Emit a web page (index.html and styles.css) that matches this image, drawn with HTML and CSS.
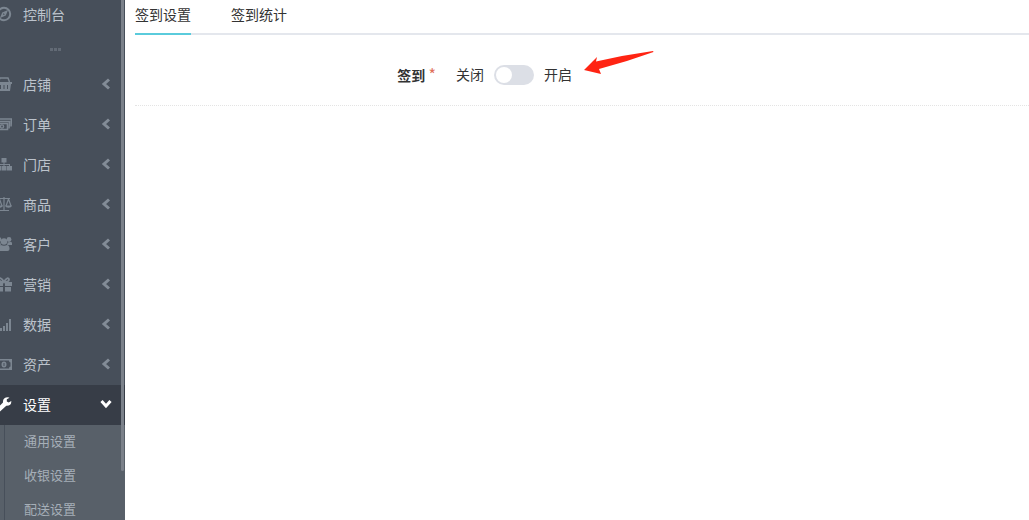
FILE: index.html
```html
<!DOCTYPE html>
<html lang="zh-CN">
<head>
    <meta charset="UTF-8">
    <meta name="viewport" content="width=device-width, initial-scale=1.0">
    <title>签到设置</title>
    <link rel="stylesheet" href="styles.css">
</head>
<body>

<!-- Shared chevron -->
<svg class="symbols" aria-hidden="true">
    <symbol id="chevron" viewBox="0 0 10 12"><path d="M8 1.5 3 6l5 4.5" fill="none" stroke="currentColor" stroke-width="3"/></symbol>
</svg>

<!-- Sidebar -->
<nav class="sidebar">
    <ul class="menu">
        <li><a class="menu-item menu-first" href="#">
            <svg class="icon" viewBox="0 0 16 16"><circle cx="8" cy="8" r="6.2" fill="none" stroke="currentColor" stroke-width="2"/><path d="M12 4 9.8 9.6 4 12 6.2 6.4zM7.2 7.2v1.8l1.8-.8z" fill="currentColor" fill-rule="evenodd"/></svg>
            <span>控制台</span></a></li>
        <li class="divider"><i></i><i></i><i></i></li>
        <li><a class="menu-item" href="#">
            <svg class="icon" viewBox="0 0 16 16"><path d="M2.5 6 4 2h8l1.500 4" fill="none" stroke="currentColor" stroke-width="1.4"/><path d="M0 6h16v2h-1l-1 7H2L1 8H0zM4 9v4h1V9zm3.500 0v4h1V9zM11 9v4h1V9z" fill="currentColor" fill-rule="evenodd"/></svg>
            <span>店铺</span><svg class="arrow"><use href="#chevron"/></svg></a></li>
        <li><a class="menu-item" href="#">
            <svg class="icon" viewBox="0 0 16 16"><path d="M2 3h13.500L15 10.500M1 5.500h12.500l-.5 7" fill="none" stroke="currentColor" stroke-width="1.6"/><path d="M.5 7.500h11v6H.5z" fill="none" stroke="currentColor" stroke-width="1.6"/><circle cx="6" cy="10.500" r="1.6" fill="none" stroke="currentColor" stroke-width="1.4"/></svg>
            <span>订单</span><svg class="arrow"><use href="#chevron"/></svg></a></li>
        <li><a class="menu-item" href="#">
            <svg class="icon" viewBox="0 0 16 16"><path d="M5.5 2h5v4.500h-2V8H14v2h2v4.500h-5V10h2V9H8.500v1h2v4.500h-5V10h2V9H3v1h2v4.500H0V10h2V8h5.500V6.500h-2z" fill="currentColor"/></svg>
            <span>门店</span><svg class="arrow"><use href="#chevron"/></svg></a></li>
        <li><a class="menu-item" href="#">
            <svg class="icon" viewBox="0 0 16 16"><path d="M8 1v13.500M3 14.500h10M2 2.500h12M3.500 3 1 10M3.500 3 6 10M12.500 3 10 10M12.500 3l2.500 7" fill="none" stroke="currentColor" stroke-width="1.2"/><path d="M0 9.500h7c-.5 3-6.500 3-7 0zM9 9.500h7c-.5 3-6.500 3-7 0z" fill="currentColor"/></svg>
            <span>商品</span><svg class="arrow"><use href="#chevron"/></svg></a></li>
        <li><a class="menu-item" href="#">
            <svg class="icon" viewBox="0 0 16 16"><g fill="currentColor"><circle cx="3" cy="3.5" r="2.400"/><circle cx="13" cy="3.5" r="2.4"/><circle cx="8" cy="5.5" r="3.2"/><path d="M0 9V7q0-1.500 2-1l2.500.5Q4.500 8 5 9zM16 9V7q0-1.500-2-1l-2.500.5q0 1.500-.5 2.500zM5 9q3 1.500 6 0 2.500 0 2.500 4 0 2-2 2h-7q-2 0-2-2Q2.500 9 5 9z"/></g></svg>
            <span>客户</span><svg class="arrow"><use href="#chevron"/></svg></a></li>
        <li><a class="menu-item" href="#">
            <svg class="icon" viewBox="0 0 16 16"><path d="M0 6h7v4H0zM9 6h7v4H9zM1 11h6v4.500H1zM9 11h6v4.500H9z" fill="currentColor"/><path d="M8 6C6 1.500 3 1.500 3 3.500S5 6 8 6c3 0 5-.5 5-2.500s-3-2-5 2.500z" fill="none" stroke="currentColor" stroke-width="1.8"/></svg>
            <span>营销</span><svg class="arrow"><use href="#chevron"/></svg></a></li>
        <li><a class="menu-item" href="#">
            <svg class="icon" viewBox="0 0 16 16"><path d="M1 13h2v2H1zM4 12h2v3H4zM7 10h2v5H7zM10 7h2v8h-2zM13 3h2v12h-2z" fill="currentColor"/></svg>
            <span>数据</span><svg class="arrow"><use href="#chevron"/></svg></a></li>
        <li><a class="menu-item" href="#">
            <svg class="icon" viewBox="0 0 16 16"><path d="M0 3h16v11H0zM3 4.500Q3 6.500 1.500 6.500v4Q3 10.500 3 12.500h10q0-2 1.500-2v-4Q13 6.500 13 4.500z" fill="currentColor" fill-rule="evenodd"/><path d="M8 5.500a2.500 3 0 1 0 0 6 2.500 3 0 1 0 0-6zM7.500 7h1v3h-1z" fill="currentColor" fill-rule="evenodd"/></svg>
            <span>资产</span><svg class="arrow"><use href="#chevron"/></svg></a></li>
        <li><a class="menu-item active" href="#">
            <svg class="icon" viewBox="0 0 16 16"><path d="M1 12.500 7 6.500Q6.500 1.500 12 1.300l1.500.4L10.800 3.300v2.200l1.900 1 2.600-1.600q.3 5-5 4.800L4 15.500q-1.200.8-2.400-.4-1.500-1.200-.6-2.600z" fill="currentColor"/></svg>
            <span>设置</span><svg class="arrow open"><use href="#chevron"/></svg></a>
            <ul class="submenu">
                <li><a href="#">通用设置</a></li>
                <li><a href="#">收银设置</a></li>
                <li><a href="#">配送设置</a></li>
            </ul>
        </li>
    </ul>
    <div class="scroll-thumb"></div>
</nav>

<!-- Content -->
<main class="content">
    <div class="tabs">
        <a class="tab current" href="#">签到设置</a>
        <a class="tab" href="#">签到统计</a>
    </div>
    <form class="form-row">
        <label class="form-label" for="signSwitch">签到 <em>*</em></label>
        <div class="form-field">
            <span>关闭</span>
            <input type="checkbox" id="signSwitch" class="switch">
            <span>开启</span>
            <svg class="pointer" viewBox="0 0 70 24" aria-hidden="true"><path d="M0 19 13 6l-1 4.500Q40 4 69 0l.5 1Q42 11 15 18l2 5z" fill="#ff2413"/></svg>
        </div>
    </form>
</main>

</body>
</html>
```

FILE: styles.css
```css
* {
    box-sizing: border-box;
}
body {
    display: flex;
    min-height: 100vh;
    margin: 0;
    font-family: "Noto Sans CJK SC", sans-serif;
    font-size: 14px;
    line-height: 18px;
    color: #333;
    background-color: #fff;
}
a {
    color: inherit;
    text-decoration: none;
}
ul {
    list-style: none;
    margin: 0;
    padding: 0;
}
.symbols {
    position: absolute;
    width: 0;
    height: 0;
}

/* Sidebar */
.sidebar {
    position: relative;
    flex: 0 0 125px;
    height: 100vh;
    overflow: hidden;
    background-color: #474f5a;
    color: #bcc3cc;
}
.menu-item {
    display: flex;
    align-items: center;
    height: 40px;
    padding: 0 14px 2px 0;
}
.menu-first {
    height: 30px;
}
.icon {
    flex: none;
    width: 16px;
    height: 16px;
    margin-left: -4px;
    margin-right: 11px;
    color: #7c8691;
}
.arrow {
    width: 10px;
    height: 12px;
    margin-left: auto;
    color: #838c97;
}
.arrow.open {
    transform: rotate(-90deg);
}
.divider {
    display: flex;
    justify-content: center;
    align-items: center;
    gap: 1px;
    height: 35px;
    padding: 4px 15px 0 0;
}
.divider i {
    width: 3px;
    height: 3px;
    background-color: #626a75;
}
.menu-item.active,
.menu-item.active .icon,
.menu-item.active .arrow {
    color: #fff;
}
.menu-item.active {
    background-color: #373d47;
}
.submenu {
    padding-left: 4px;
    background-color: #586069;
    color: #a6afb8;
    font-size: 13px;
}
.submenu a {
    display: block;
    padding: 7px 0 9px 19px;
    border-left: 1px solid #474f5a;
}
.scroll-thumb {
    position: absolute;
    top: 0;
    right: 1px;
    width: 3px;
    height: 471px;
    border-radius: 0 0 2px 2px;
    background-color: #7b818a;
}

/* Content */
.content {
    flex: 1;
    min-width: 0;
    padding-left: 10px;
}
.tabs {
    display: flex;
    gap: 40px;
    height: 35px;
    border-bottom: 2px solid #e4e7ed;
}
.tab {
    height: 35px;
    padding-top: 5px;
}
.tab.current {
    border-bottom: 2px solid #5acbdc;
}
.form-row {
    display: flex;
    padding: 30px 0 20px;
    border-bottom: 1px dotted #e4e4e4;
}
.form-label {
    width: 34%;
    padding-right: 3px;
    text-align: right;
    font-weight: bold;
}
.form-label em {
    font-size: 16px;
    font-style: normal;
    font-weight: normal;
    color: #e0705a;
}
.form-field {
    display: flex;
    gap: 10px;
    height: 20px;
    padding-left: 17px;
}
.switch {
    appearance: none;
    width: 40px;
    height: 20px;
    margin: 0;
    padding: 2px;
    border-radius: 10px;
    background-color: #dcdfe6;
    cursor: pointer;
}
.switch::before {
    content: "";
    display: block;
    width: 16px;
    height: 16px;
    border-radius: 50%;
    background-color: #fff;
}
.switch:checked {
    background-color: #5acbdc;
}
.switch:checked::before {
    margin-left: 20px;
}
.pointer {
    width: 70px;
    height: 24px;
    margin: -14px 0 0 2px;
}
```
